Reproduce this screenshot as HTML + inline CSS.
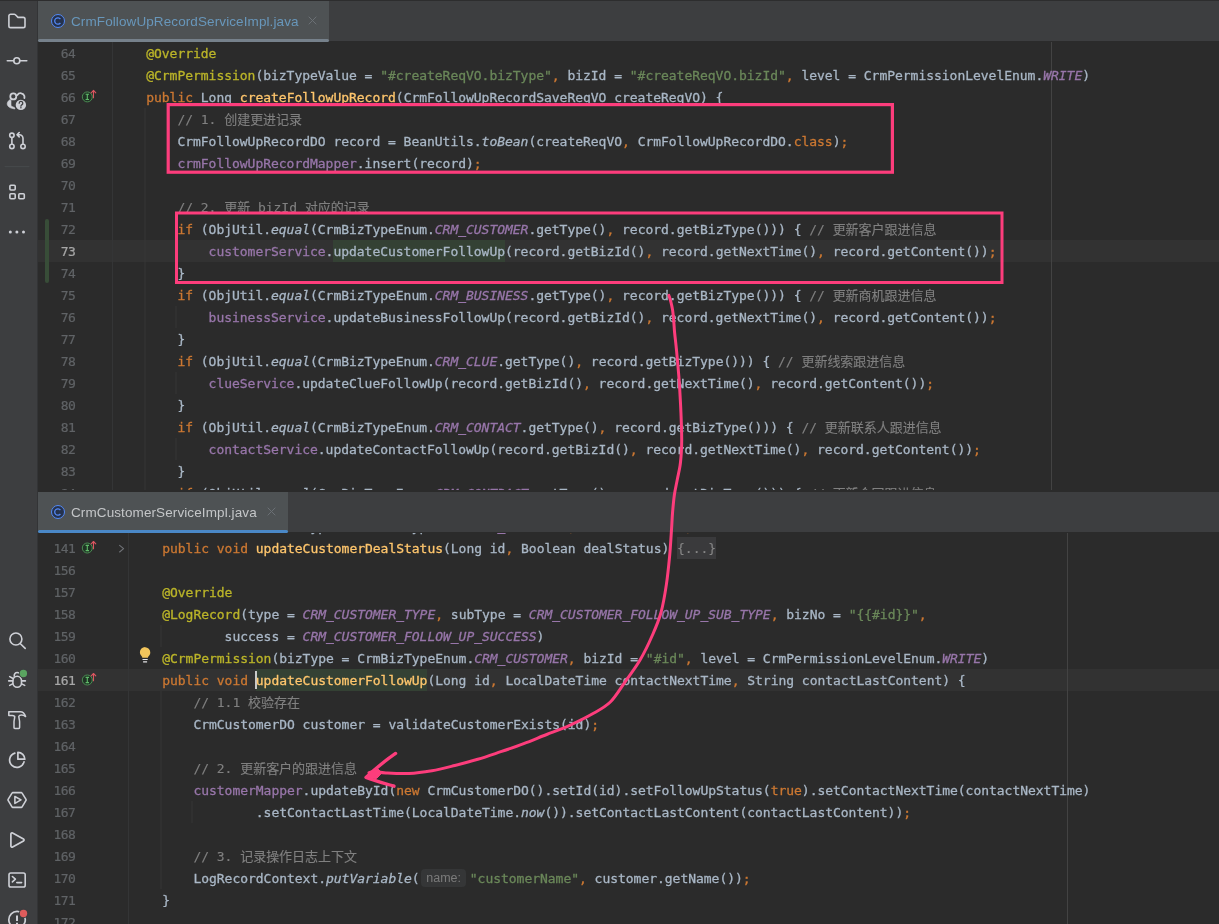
<!DOCTYPE html>
<html lang="zh">
<head>
<meta charset="utf-8">
<title>CrmFollowUpRecordServiceImpl.java</title>
<style>
html,body{margin:0;padding:0;}
body{width:1219px;height:924px;overflow:hidden;background:#2b2b2b;position:relative;
  font-family:"Liberation Sans","Noto Sans CJK SC",sans-serif;}
#side{position:absolute;left:0;top:0;width:37px;height:924px;background:#3d3e40;border-right:1px solid #333436;}
#side svg{position:absolute;left:0;top:0;}
.tabbar{position:absolute;left:38px;width:1181px;background:#3d3e40;}
#tb1{top:0;height:41px;border-top:1px solid #2b2b2b;box-sizing:border-box;z-index:2;}
#tb2{top:492px;height:40px;z-index:2;}
.tab{position:absolute;left:0;top:0;bottom:0;background:#4e5254;}
.tab .ul{position:absolute;left:0;right:0;bottom:-1px;height:3px;border-radius:2px;}
.tab .nm{will-change:transform;position:absolute;left:33px;font-size:13.5px;line-height:16px;white-space:nowrap;letter-spacing:0.1px;}
.tab svg{position:absolute;}
.ed{position:absolute;left:38px;width:1181px;overflow:hidden;background:#2b2b2b;}
#ed1{top:42px;height:448px;}
#ed2{top:533px;height:391px;}
.curline{position:absolute;left:0;width:1181px;height:22px;background:#323232;}
.gut{will-change:transform;position:absolute;left:0;width:37.4px;text-align:right;}
.ln{-webkit-text-stroke:0.2px;height:22px;line-height:22px;font-family:"DejaVu Sans Mono","Liberation Mono",monospace;font-size:13px;color:#606366;letter-spacing:-0.5px;}
.ln.cur{color:#a8a8a8;}
.code{position:absolute;font-family:"DejaVu Sans Mono","Liberation Mono","Noto Sans CJK SC",monospace;font-size:13px;letter-spacing:-0.027px;color:#a9b7c6;will-change:transform;-webkit-text-stroke:0.3px;}
.cl{height:22px;line-height:22px;white-space:pre;}
.k{color:#cc7832}.a{color:#bbb529}.s{color:#6a8759}.c{color:#808080;-webkit-text-stroke:0.12px}
.f{color:#9876aa}.sf{color:#9876aa;font-style:italic}.m{color:#ffc66d}.i{font-style:italic}
.hl{}
.mhl{color:#ffc66d}
.fold{color:#878787;-webkit-text-stroke:0.1px}
.caret{display:none}
.hlbox{position:absolute;height:22px;background:#344134;}
.hint{display:inline-block;width:50.2px;height:22px;vertical-align:top;position:relative;}
.hint span{position:absolute;left:1.5px;top:1px;width:45px;height:18px;line-height:18px;background:#353637;border-radius:4px;
  font-family:"Liberation Sans",sans-serif;font-size:12.5px;color:#7b7b7b;text-align:center;-webkit-text-stroke:0;}
.vline{position:absolute;top:0;bottom:0;width:1px;}
.guide{position:absolute;width:1px;background:#383838;}
#anno{position:absolute;left:0;top:0;z-index:5;}
.deco{position:absolute;left:0;top:0;}
</style>
</head>
<body>

<div style="position:absolute;left:0;top:0;width:1219px;height:1px;background:#2d2d2e;z-index:4"></div>
<div id="side">
<svg width="38" height="924" viewBox="0 0 38 924" fill="none" stroke="#ced0d6" stroke-width="1.6" stroke-linecap="round" stroke-linejoin="round">
<!-- folder -->
<path d="M8.9 16 a1.7 1.7 0 0 1 1.7 -1.7 h3.6 c0.5 0 0.9 0.2 1.2 0.5 l2.6 2.6 h5.3 a1.7 1.7 0 0 1 1.7 1.7 v6.8 a1.7 1.7 0 0 1 -1.7 1.7 h-12.7 a1.7 1.7 0 0 1 -1.7 -1.7 z"/>
<!-- commit -->
<circle cx="16.8" cy="60.8" r="3"/><path d="M7.3 60.8 H13.6 M20 60.8 H26.8"/>
<!-- code with me -->
<circle cx="13.3" cy="96.4" r="3" stroke-width="1.8"/>
<path d="M17.4 95 a3.9 3.9 0 0 1 7 1 v2" stroke-width="1.8"/>
<path d="M9.8 99.7 C7.6 101 6.8 103.4 7.4 105 C8.4 107.5 11.8 108.7 15 108.9 L14.4 107.4 C12.4 106.8 11.2 106.2 11 105.4 L11 100.6 Z" fill="#ced0d6" stroke-width="0.6"/>
<circle cx="20.9" cy="104.9" r="5.9" fill="#3d3e40" stroke="none"/>
<circle cx="20.9" cy="104.9" r="5.2" fill="#ced0d6" stroke="none"/>
<path d="M19.2 103.2 a1.8 1.8 0 1 1 2.6 1.6 c-0.6 0.4 -0.9 0.7 -0.9 1.4" stroke="#3d3e40" stroke-width="1.3"/>
<circle cx="20.9" cy="107.7" r="0.8" fill="#3d3e40" stroke="none"/>
<!-- pull requests -->
<circle cx="11.9" cy="135.3" r="2.2"/><circle cx="11.9" cy="146.4" r="2.2"/><circle cx="23" cy="146.4" r="2.2"/>
<path d="M11.9 137.6 V144.1"/>
<path d="M23 144.1 V138.3 a3.6 3.6 0 0 0 -3.6 -3.6 H17.1 M19.2 132.5 L17 134.7 L19.2 136.9"/>
<!-- separator -->
<path d="M5 166.6 H29" stroke="#47494c" stroke-width="1"/>
<!-- structure -->
<rect x="9.9" y="185.2" width="5.3" height="4.8" rx="1"/>
<rect x="9.9" y="193.8" width="5.3" height="5" rx="1"/>
<rect x="18.8" y="193.8" width="5.5" height="5" rx="1"/>
<!-- more -->
<g fill="#ced0d6" stroke="none"><circle cx="10.3" cy="232" r="1.5"/><circle cx="16.9" cy="232" r="1.5"/><circle cx="23.5" cy="232" r="1.5"/></g>
<!-- search -->
<circle cx="15.9" cy="639" r="6"/><path d="M20.4 643.7 L25.2 648.4"/>
<!-- debug -->
<rect x="12.9" y="676.3" width="8.6" height="11" rx="4.3" ry="4.6"/>
<path d="M14.2 676.3 C14.2 673.8 15.4 672.5 17.2 672.5 C17.9 672.5 18.5 672.7 18.9 673"/>
<path d="M9.7 676.6 L12.6 678.2 M8.7 680.9 H12.6 M9.7 685.4 L12.6 683.9 M24.7 685.4 L21.8 683.9 M25.4 680.9 H21.8"/>
<circle cx="23.4" cy="673.5" r="4.6" fill="#3d3e40" stroke="none"/>
<circle cx="23.4" cy="673.5" r="3.7" fill="#5aa460" stroke="none"/>
<!-- build hammer -->
<path d="M8.8 711.7 H20.3 C23 711.7 24.6 713.6 25.6 716.6 C23.6 715.1 21.6 714.8 19.6 715.4 L18.8 716.4 C18.9 718.6 19.6 720.2 19.6 721.8 V727.6 a0.9 0.9 0 0 1 -0.9 0.9 H14.9 a0.9 0.9 0 0 1 -0.9 -0.9 V721.8 C14 720.2 14.7 718.6 14.7 716.4 C13.9 715.8 13 715.6 12.2 715.6 H8.8 Z" stroke-width="1.5"/>
<!-- profiler -->
<path d="M14.8 753.1 A7.3 7.3 0 1 0 24 761.9" stroke-width="1.7"/>
<path d="M17.9 752.3 A6.9 6.9 0 0 1 24.8 759.2 H17.9 Z" stroke-width="1.7"/>
<!-- services -->
<path d="M12.9 792.6 h8.3 a1 1 0 0 1 0.9 0.5 l3.9 6.3 a1 1 0 0 1 0 1 l-3.9 6.5 a1 1 0 0 1 -0.9 0.5 h-8.3 a1 1 0 0 1 -0.9 -0.5 l-3.9 -6.5 a1 1 0 0 1 0 -1 l3.9 -6.3 a1 1 0 0 1 0.9 -0.5 z"/>
<path d="M14.9 796.5 V803.4 L21 799.9 Z" stroke-width="1.6"/>
<!-- run -->
<path d="M10.9 834 V846 a1.1 1.1 0 0 0 1.7 0.95 L23.5 840.9 a1.1 1.1 0 0 0 0 -1.9 L12.6 833.05 a1.1 1.1 0 0 0 -1.7 0.95 z" stroke-width="1.7"/>
<!-- terminal -->
<rect x="9" y="873" width="16.2" height="14" rx="1.8"/>
<path d="M12.4 876.5 L15.4 879.2 L12.4 881.9 M16.8 882.6 H21.6" stroke-width="1.6"/>
<!-- problems -->
<circle cx="17.05" cy="919.7" r="8.25" stroke-width="1.7"/>
<path d="M17 915.4 V921" stroke-width="2" stroke-linecap="butt"/>
<path d="M17 922.8 V924" stroke-width="2" stroke-linecap="butt"/>
<circle cx="23.5" cy="913.5" r="4.7" fill="#3d3e40" stroke="none"/>
<circle cx="23.5" cy="913.5" r="3.7" fill="#e05c5c" stroke="none"/>

</svg>
</div>

<div class="tabbar" id="tb1">
  <div class="tab" style="width:291px">
    <svg style="left:12px;top:12px" width="16" height="16" viewBox="0 0 16 16"><circle cx="8" cy="8" r="6.5" fill="#25324d" stroke="#548af7" stroke-width="1"/><path d="M10.4 6 A3.2 3.2 0 1 0 10.4 10" fill="none" stroke="#548af7" stroke-width="1.25"/></svg>
    <span class="nm" style="top:13px;color:#6897bb">CrmFollowUpRecordServiceImpl.java</span>
    <svg style="left:269.1px;top:14.2px" width="11" height="11" viewBox="0 0 11 11"><path d="M1.7 1.7 L9.3 9.3 M9.3 1.7 L1.7 9.3" stroke="#6b7075" stroke-width="1" fill="none"/></svg>
    <div class="ul" style="background:#76818b"></div>
  </div>
</div>

<div class="ed" id="ed1">
  <div class="curline" style="top:198px"></div>
  <div class="hlbox" style="left:295.2px;top:198px;width:171.6px"></div>
  <div class="vline" style="left:74px;background:#343536"></div>
  <svg class="deco" width="1181" height="450" viewBox="38 42 1181 450"><rect x="45" y="219" width="4" height="64" rx="2" fill="#384d38"/><g transform="translate(87.3 96.9)"><circle cx="0" cy="0" r="5" fill="#1f3324" stroke="#4b8c53" stroke-width="1"/><path d="M-1.7 -2.6 H1.7 M-1.7 2.6 H1.7 M0 -2.6 V2.6" stroke="#60bb69" stroke-width="1.1" fill="none"/><path d="M6.2 0.8 V-6.4 M3.9 -4.1 L6.2 -6.5 L8.5 -4.1" stroke="#dc5660" stroke-width="1.1" fill="none" stroke-linecap="round" stroke-linejoin="round"/></g><g stroke="#373737" stroke-width="1"><path d="M145 108 V492"/><path d="M176 240 V262 M176 306 V328 M176 372 V394 M176 438 V460"/></g></svg>
  <div class="vline" style="left:1013px;background:#434343"></div>
  <div class="gut" style="top:1px">
<div class="ln">64</div>
<div class="ln">65</div>
<div class="ln">66</div>
<div class="ln">67</div>
<div class="ln">68</div>
<div class="ln">69</div>
<div class="ln">70</div>
<div class="ln">71</div>
<div class="ln">72</div>
<div class="ln cur">73</div>
<div class="ln">74</div>
<div class="ln">75</div>
<div class="ln">76</div>
<div class="ln">77</div>
<div class="ln">78</div>
<div class="ln">79</div>
<div class="ln">80</div>
<div class="ln">81</div>
<div class="ln">82</div>
<div class="ln">83</div>
<div class="ln">84</div>
  </div>
  <div class="code" style="left:76.8px;top:1px">
<div class="cl">    <span class="a">@Override</span></div>
<div class="cl">    <span class="a">@CrmPermission</span>(bizTypeValue = <span class="s">"#createReqVO.bizType"</span><span class="k">,</span> bizId = <span class="s">"#createReqVO.bizId"</span><span class="k">,</span> level = CrmPermissionLevelEnum.<span class="sf">WRITE</span>)</div>
<div class="cl">    <span class="k">public</span> Long <span class="m">createFollowUpRecord</span>(CrmFollowUpRecordSaveReqVO createReqVO) {</div>
<div class="cl">        <span class="c">// 1. 创建更进记录</span></div>
<div class="cl">        CrmFollowUpRecordDO record = BeanUtils.<span class="i">toBean</span>(createReqVO<span class="k">,</span> CrmFollowUpRecordDO.<span class="k">class</span>)<span class="k">;</span></div>
<div class="cl">        <span class="f">crmFollowUpRecordMapper</span>.insert(record)<span class="k">;</span></div>
<div class="cl">&nbsp;</div>
<div class="cl">        <span class="c">// 2. 更新 bizId 对应的记录</span></div>
<div class="cl">        <span class="k">if</span> (ObjUtil.<span class="i">equal</span>(CrmBizTypeEnum.<span class="sf">CRM_CUSTOMER</span>.getType()<span class="k">,</span> record.getBizType())) { <span class="c">// 更新客户跟进信息</span></div>
<div class="cl cur">            <span class="f">customerService</span>.<span class="hl">updateCustomerFollowUp</span>(record.getBizId()<span class="k">,</span> record.getNextTime()<span class="k">,</span> record.getContent())<span class="k">;</span></div>
<div class="cl">        }</div>
<div class="cl">        <span class="k">if</span> (ObjUtil.<span class="i">equal</span>(CrmBizTypeEnum.<span class="sf">CRM_BUSINESS</span>.getType()<span class="k">,</span> record.getBizType())) { <span class="c">// 更新商机跟进信息</span></div>
<div class="cl">            <span class="f">businessService</span>.updateBusinessFollowUp(record.getBizId()<span class="k">,</span> record.getNextTime()<span class="k">,</span> record.getContent())<span class="k">;</span></div>
<div class="cl">        }</div>
<div class="cl">        <span class="k">if</span> (ObjUtil.<span class="i">equal</span>(CrmBizTypeEnum.<span class="sf">CRM_CLUE</span>.getType()<span class="k">,</span> record.getBizType())) { <span class="c">// 更新线索跟进信息</span></div>
<div class="cl">            <span class="f">clueService</span>.updateClueFollowUp(record.getBizId()<span class="k">,</span> record.getNextTime()<span class="k">,</span> record.getContent())<span class="k">;</span></div>
<div class="cl">        }</div>
<div class="cl">        <span class="k">if</span> (ObjUtil.<span class="i">equal</span>(CrmBizTypeEnum.<span class="sf">CRM_CONTACT</span>.getType()<span class="k">,</span> record.getBizType())) { <span class="c">// 更新联系人跟进信息</span></div>
<div class="cl">            <span class="f">contactService</span>.updateContactFollowUp(record.getBizId()<span class="k">,</span> record.getNextTime()<span class="k">,</span> record.getContent())<span class="k">;</span></div>
<div class="cl">        }</div>
<div class="cl">        <span class="k">if</span> (ObjUtil.<span class="i">equal</span>(CrmBizTypeEnum.<span class="sf">CRM_CONTRACT</span>.getType()<span class="k">,</span> record.getBizType())) { <span class="c">// 更新合同跟进信息</span></div>
  </div>
</div>

<div class="tabbar" id="tb2">
  <div class="tab" style="width:250px">
    <svg style="left:12px;top:12px" width="16" height="16" viewBox="0 0 16 16"><circle cx="8" cy="8" r="6.5" fill="#25324d" stroke="#548af7" stroke-width="1"/><path d="M10.4 6 A3.2 3.2 0 1 0 10.4 10" fill="none" stroke="#548af7" stroke-width="1.25"/></svg>
    <span class="nm" style="top:13px;color:#c4c6c8">CrmCustomerServiceImpl.java</span>
    <svg style="left:228.4px;top:14.4px" width="11" height="11" viewBox="0 0 11 11"><path d="M1.7 1.7 L9.3 9.3 M9.3 1.7 L1.7 9.3" stroke="#6b7075" stroke-width="1" fill="none"/></svg>
    <div class="ul" style="background:#4a88c7"></div>
  </div>
</div>

<div class="ed" id="ed2">
  <div class="curline" style="top:136px"></div>
  <div class="hlbox" style="left:217.6px;top:136px;width:171.6px"></div>
  <div class="hlbox" style="left:639.1px;top:4px;width:38.9px;background:#3a3a3c"></div>
  <div style="position:absolute;left:217.2px;top:137.8px;width:2px;height:17.8px;background:#c9c9c9"></div>
  <div class="vline" style="left:90px;background:#343536"></div>
  <svg class="deco" width="1181" height="391" viewBox="38 533 1181 391"><g transform="translate(87.3 548.0)"><circle cx="0" cy="0" r="5" fill="#1f3324" stroke="#4b8c53" stroke-width="1"/><path d="M-1.7 -2.6 H1.7 M-1.7 2.6 H1.7 M0 -2.6 V2.6" stroke="#60bb69" stroke-width="1.1" fill="none"/><path d="M6.2 0.8 V-6.4 M3.9 -4.1 L6.2 -6.5 L8.5 -4.1" stroke="#dc5660" stroke-width="1.1" fill="none" stroke-linecap="round" stroke-linejoin="round"/></g><g transform="translate(87.3 680.0)"><circle cx="0" cy="0" r="5" fill="#1f3324" stroke="#4b8c53" stroke-width="1"/><path d="M-1.7 -2.6 H1.7 M-1.7 2.6 H1.7 M0 -2.6 V2.6" stroke="#60bb69" stroke-width="1.1" fill="none"/><path d="M6.2 0.8 V-6.4 M3.9 -4.1 L6.2 -6.5 L8.5 -4.1" stroke="#dc5660" stroke-width="1.1" fill="none" stroke-linecap="round" stroke-linejoin="round"/></g><path d="M119.6 545.4 L123.6 548.7 L119.6 552" stroke="#707378" stroke-width="1.1" fill="none" stroke-linecap="round" stroke-linejoin="round"/><g stroke="#373737" stroke-width="1"><path d="M161 625 V647 M161 691 V889"/><path d="M192 801 V823"/></g><g><path d="M145.1 647.2 a5.2 5.2 0 0 1 5.2 5.2 c0 2 -1.1 3.3 -2.3 4.5 v0.9 h-5.8 v-0.9 c-1.2 -1.3 -2.3 -2.6 -2.3 -4.6 a5.2 5.2 0 0 1 5.2 -5.2 z" fill="#f2c55c"/><path d="M142.5 659.5 H147.7 M143.1 661.8 H147.1" stroke="#e4e4e6" stroke-width="1.15" fill="none"/></g></svg>
  <div class="vline" style="left:1029px;background:#434343"></div>
  <div class="gut" style="top:-17px">
<div class="ln">140</div>
<div class="ln">141</div>
<div class="ln">156</div>
<div class="ln">157</div>
<div class="ln">158</div>
<div class="ln">159</div>
<div class="ln">160</div>
<div class="ln cur">161</div>
<div class="ln">162</div>
<div class="ln">163</div>
<div class="ln">164</div>
<div class="ln">165</div>
<div class="ln">166</div>
<div class="ln">167</div>
<div class="ln">168</div>
<div class="ln">169</div>
<div class="ln">170</div>
<div class="ln">171</div>
<div class="ln">172</div>
<div class="ln">173</div>
  </div>
  <div class="code" style="left:92.8px;top:-17px">
<div class="cl">    <span class="a">@CrmPermission</span>(bizType = CrmBizTypeEnum.<span class="sf">CRM_CUSTOMER</span><span class="k">,</span> bizId = <span class="s">"#id"</span><span class="k">,</span> level = CrmPermissionLevelEnum.<span class="sf">WRITE</span>)</div>
<div class="cl">    <span class="k">public void</span> <span class="m">updateCustomerDealStatus</span>(Long id<span class="k">,</span> Boolean dealStatus) <span class="fold">{...}</span></div>
<div class="cl">&nbsp;</div>
<div class="cl">    <span class="a">@Override</span></div>
<div class="cl">    <span class="a">@LogRecord</span>(type = <span class="sf">CRM_CUSTOMER_TYPE</span><span class="k">,</span> subType = <span class="sf">CRM_CUSTOMER_FOLLOW_UP_SUB_TYPE</span><span class="k">,</span> bizNo = <span class="s">"{{#id}}"</span><span class="k">,</span></div>
<div class="cl">            success = <span class="sf">CRM_CUSTOMER_FOLLOW_UP_SUCCESS</span>)</div>
<div class="cl">    <span class="a">@CrmPermission</span>(bizType = CrmBizTypeEnum.<span class="sf">CRM_CUSTOMER</span><span class="k">,</span> bizId = <span class="s">"#id"</span><span class="k">,</span> level = CrmPermissionLevelEnum.<span class="sf">WRITE</span>)</div>
<div class="cl cur">    <span class="k">public void</span> <span class="caret"></span><span class="mhl">updateCustomerFollowUp</span>(Long id<span class="k">,</span> LocalDateTime contactNextTime<span class="k">,</span> String contactLastContent) {</div>
<div class="cl">        <span class="c">// 1.1 校验存在</span></div>
<div class="cl">        CrmCustomerDO customer = validateCustomerExists(id)<span class="k">;</span></div>
<div class="cl">&nbsp;</div>
<div class="cl">        <span class="c">// 2. 更新客户的跟进信息</span></div>
<div class="cl">        <span class="f">customerMapper</span>.updateById(<span class="k">new</span> CrmCustomerDO().setId(id).setFollowUpStatus(<span class="k">true</span>).setContactNextTime(contactNextTime)</div>
<div class="cl">                .setContactLastTime(LocalDateTime.<span class="i">now</span>()).setContactLastContent(contactLastContent))<span class="k">;</span></div>
<div class="cl">&nbsp;</div>
<div class="cl">        <span class="c">// 3. 记录操作日志上下文</span></div>
<div class="cl">        LogRecordContext.<span class="i">putVariable</span>(<span class="hint"><span>name:</span></span><span class="s">"customerName"</span><span class="k">,</span> customer.getName())<span class="k">;</span></div>
<div class="cl">    }</div>
<div class="cl">&nbsp;</div>
<div class="cl">    <span class="a">@Override</span></div>
  </div>
</div>

<svg id="anno" width="1219" height="924" viewBox="0 0 1219 924" fill="none">
<g stroke="#fd3d7c" stroke-linejoin="miter">
<rect x="168.2" y="104.6" width="724.2" height="67.6" stroke-width="3.2"/>
<rect x="176.5" y="213" width="825.5" height="69.5" stroke-width="3"/>
<path d="M668.9 295.4 C669.2 296.4 670.2 299.3 670.8 301.7 C671.4 304.1 672.0 306.6 672.5 309.5 C673.0 312.4 673.2 315.6 673.6 319.4 C674.0 323.2 674.1 327.2 674.6 332.5 C675.1 337.8 675.9 343.6 676.6 351.2 C677.3 358.8 678.3 369.3 679.0 378.3 C679.7 387.3 680.2 397.6 680.6 405.4 C681.0 413.2 681.2 419.3 681.4 425.0 C681.6 430.7 681.7 435.1 681.7 439.7 C681.7 444.3 681.6 448.4 681.3 452.8 C681.0 457.2 680.7 461.5 680.0 466.0 C679.3 470.5 678.1 475.2 677.2 480.0 C676.3 484.8 675.2 489.4 674.4 494.7 C673.6 500.0 673.1 506.4 672.6 512.0 C672.1 517.6 672.1 520.7 671.6 528.1 C671.1 535.5 670.5 546.9 669.6 556.3 C668.7 565.7 667.8 575.0 666.4 584.4 C665.0 593.8 663.3 604.1 661.0 612.5 C658.7 620.9 656.0 627.0 652.5 635.0 C649.0 643.0 644.6 652.3 639.9 660.3 C635.2 668.3 629.3 675.8 624.4 682.8 C619.5 689.8 615.6 696.8 610.3 702.0 C605.0 707.2 599.4 709.9 592.6 713.8 C585.8 717.7 577.4 721.8 569.7 725.3 C562.1 728.8 554.4 731.5 546.7 734.5 C539.0 737.5 531.4 740.7 523.7 743.6 C516.1 746.5 508.5 749.1 500.8 751.7 C493.1 754.3 485.5 757.0 477.8 759.3 C470.1 761.6 462.5 763.6 454.8 765.5 C447.1 767.4 439.5 769.4 431.9 770.7 C424.2 772.0 416.6 773.1 408.9 773.5 C401.2 773.9 391.6 773.3 385.9 773.0 C380.2 772.7 377.3 771.6 374.5 771.5 C371.7 771.4 369.9 772.4 369.0 772.6" stroke-width="3" stroke-linecap="round" stroke-linejoin="round"/>
<path d="M395.6 753.4 C386 760 375 769 366 777.4 C375 781 385 783.6 394 786.2" stroke-width="3.3" stroke-linecap="round" stroke-linejoin="round"/>
<path d="M366 777.4 L377 768.2 L382 772.8 L376.5 778.6 Z" fill="#fd3d7c" stroke-width="1"/>
</g>

</svg>

</body>
</html>
